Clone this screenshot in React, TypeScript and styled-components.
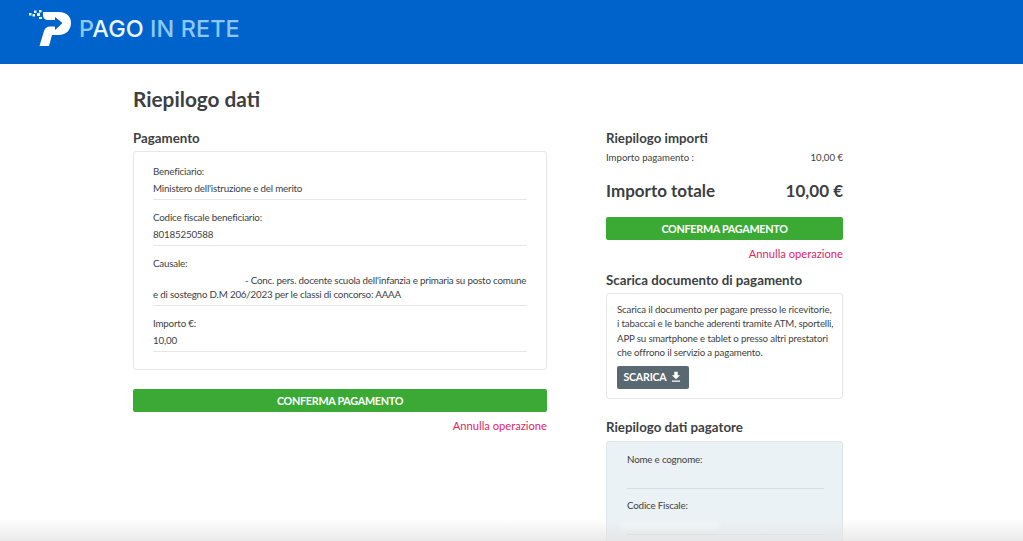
import styled, { createGlobalStyle } from 'styled-components';
import { MdFileDownload } from 'react-icons/md';

const GlobalStyle = createGlobalStyle`
  html, body {
    margin: 0;
    padding: 0;
    height: 541px;
    overflow: hidden;
    background: #fff;
    font-family: "Lato", "Open Sans", sans-serif;
    color: #3d3f42;
  }
  * {
    box-sizing: border-box;
  }
`;

const Page = styled.div`
  position: relative;
  height: 541px;
  overflow: hidden;
`;

const Header = styled.header`
  display: flex;
  align-items: flex-start;
  height: 64px;
  padding: 10px 0 0 29px;
  background: #0063cb;
`;

const Brand = styled.div`
  display: flex;
  align-items: center;
  gap: 6px;
`;

const BrandName = styled.span`
  font-family: "Inter", sans-serif;
  font-size: 23.4px;
  font-weight: 500;
  letter-spacing: 0.1px;
  color: #8cc8fb;
  margin-top: -1px;

  b {
    font-weight: 500;
    color: #eaf5ff;
  }
`;

const Main = styled.main`
  width: 710px;
  margin-left: 133px;
  padding-top: 22px;
`;

const Title = styled.h1`
  margin: 0 0 18px;
  height: 26px;
  font-size: 20.8px;
  line-height: 26px;
  font-weight: 700;
`;

const Columns = styled.div`
  display: grid;
  grid-template-columns: 414px 237px;
  column-gap: 59px;
  align-items: start;
`;

const Column = styled.section`
  display: flex;
  flex-direction: column;
`;

const SectionTitle = styled.h2`
  margin: 0 0 5px;
  height: 16px;
  font-size: 13.3px;
  line-height: 16px;
  font-weight: 700;
  white-space: nowrap;
`;

const Card = styled.div`
  border: 1px solid #e6e6e6;
  border-radius: 3px;
  background: #fff;
`;

const DataCard = styled(Card)`
  padding: 11px 19px 17px;
  margin-bottom: 19px;
`;

const Field = styled.div`
  padding-bottom: 4px;
  border-bottom: 1px solid #e6e6e6;
  margin-bottom: 9px;

  &:last-child {
    margin-bottom: 0;
  }
`;

const Label = styled.div`
  height: 17px;
  font-size: 9.8px;
  line-height: 17px;
  letter-spacing: -0.2px;
  margin-bottom: 1px;
`;

const Value = styled.div<{ $indent?: number }>`
  font-size: 9.8px;
  line-height: 14px;
  letter-spacing: -0.2px;
  min-height: 14px;
  margin-top: 1px;
  text-indent: ${(p) => p.$indent ?? 0}px;
`;

const PrimaryButton = styled.button`
  display: block;
  width: 100%;
  height: 23px;
  padding: 0;
  border: 0;
  border-radius: 2px;
  background: #3aaa35;
  color: #fff;
  font-family: inherit;
  font-size: 10.8px;
  font-weight: 700;
  letter-spacing: -0.3px;
  line-height: 23px;
  text-align: center;
`;

const CancelLink = styled.a`
  display: block;
  height: 16px;
  margin-top: 6px;
  font-size: 11.2px;
  line-height: 16px;
  text-align: right;
  color: #e2265f;
`;

const AmountRow = styled.div`
  display: flex;
  justify-content: space-between;
  height: 14px;
  font-size: 9.6px;
  line-height: 14px;
  margin-top: 2px;
`;

const TotalRow = styled.div`
  display: flex;
  justify-content: space-between;
  height: 24px;
  margin: 14px 0 14px;
  font-size: 17px;
  line-height: 24px;
  font-weight: 700;
`;

const SummaryBlock = styled.div`
  margin-bottom: 10px;
`;

const DownloadCard = styled(Card)`
  padding: 8px 10px 9px;
  margin-bottom: 20px;
`;

const DownloadText = styled.p`
  margin: 0 0 6px;
  font-size: 9.7px;
  line-height: 14.3px;
  letter-spacing: -0.15px;
  white-space: nowrap;
`;

const DownloadButton = styled.button`
  display: inline-flex;
  align-items: center;
  justify-content: center;
  gap: 2px;
  width: 72px;
  height: 23px;
  padding: 0;
  border: 0;
  border-radius: 2px;
  background: #5a6872;
  color: #fff;
  font-family: inherit;
  font-size: 10.6px;
  font-weight: 700;
  letter-spacing: -0.2px;
`;

const PayerCard = styled(Card)`
  padding: 9px 18px 0 20px;
  margin-top: 1px;
  background: #ebf2f6;
  border-color: #e1e6ea;
  height: 140px;
`;

const PayerField = styled.div`
  height: 38px;
  border-bottom: 1px solid #d8dde0;
  margin-bottom: 8px;
  position: relative;
  font-size: 9.8px;
  letter-spacing: -0.2px;
  line-height: 17px;
`;

const Redaction = styled.span`
  position: absolute;
  left: -7px;
  bottom: 4px;
  width: 100px;
  height: 8px;
  border-radius: 4px;
  background: #f4f8fa;
  filter: blur(2px);
`;

const BottomFade = styled.div`
  position: absolute;
  left: 0;
  right: 0;
  bottom: 0;
  height: 22px;
  background: linear-gradient(to bottom, rgba(235, 235, 235, 0), rgba(228, 228, 228, 0.8));
  pointer-events: none;
`;

function Logo() {
  return (
    <svg width="44" height="38" viewBox="0 0 44 38" fill="none">
      <g fill="#e8f3fc">
        <rect x="0" y="3" width="2.5" height="2.5" />
        <rect x="3.5" y="4" width="2.5" height="2.5" />
        <rect x="5" y="0.5" width="2.5" height="2.5" />
        <rect x="8" y="3" width="3" height="3" />
        <rect x="10" y="0" width="2.5" height="2.5" />
        <rect x="10" y="7" width="3" height="2" />
      </g>
      <path
        fill="#fff"
        d="M14 2 H30 C38 2 42 7 42 13 C42 20 37 25 30 25 H23 L20 36 H10.5 L15 21 C16 18 18 16.5 21 16.5 H26 V20 L33.5 13 L26 7 V10 H19 C16 10 14.5 8 14 6 Z"
      />
    </svg>
  );
}

function App() {
  return (
    <Page>
      <GlobalStyle />
      <Header>
        <Brand>
          <Logo />
          <BrandName>
            P<b>AGO</b> IN RETE
          </BrandName>
        </Brand>
      </Header>
      <Main>
        <Title>Riepilogo dati</Title>
        <Columns>
          <Column>
            <SectionTitle>Pagamento</SectionTitle>
            <DataCard>
              <Field>
                <Label>Beneficiario:</Label>
                <Value>Ministero dell'istruzione e del merito</Value>
              </Field>
              <Field>
                <Label>Codice fiscale beneficiario:</Label>
                <Value>80185250588</Value>
              </Field>
              <Field>
                <Label>Causale:</Label>
                <Value $indent={92}>
                  - Conc. pers. docente scuola dell'infanzia e primaria su posto comune e di sostegno D.M
                  206/2023 per le classi di concorso: AAAA
                </Value>
              </Field>
              <Field>
                <Label>Importo €:</Label>
                <Value>10,00</Value>
              </Field>
            </DataCard>
            <PrimaryButton>CONFERMA PAGAMENTO</PrimaryButton>
            <CancelLink>Annulla operazione</CancelLink>
          </Column>
          <Column>
            <SummaryBlock>
              <SectionTitle>Riepilogo importi</SectionTitle>
              <AmountRow>
                <span>Importo pagamento :</span>
                <span>10,00 €</span>
              </AmountRow>
              <TotalRow>
                <span>Importo totale</span>
                <span>10,00 €</span>
              </TotalRow>
              <PrimaryButton>CONFERMA PAGAMENTO</PrimaryButton>
              <CancelLink>Annulla operazione</CancelLink>
            </SummaryBlock>
            <SectionTitle>Scarica documento di pagamento</SectionTitle>
            <DownloadCard>
              <DownloadText>
                Scarica il documento per pagare presso le ricevitorie,
                <br />
                i tabaccai e le banche aderenti tramite ATM, sportelli,
                <br />
                APP su smartphone e tablet o presso altri prestatori
                <br />
                che offrono il servizio a pagamento.
              </DownloadText>
              <DownloadButton>
                SCARICA <MdFileDownload size={14} />
              </DownloadButton>
            </DownloadCard>
            <SectionTitle>Riepilogo dati pagatore</SectionTitle>
            <PayerCard>
              <PayerField>Nome e cognome:</PayerField>
              <PayerField>
                Codice Fiscale:
                <Redaction />
              </PayerField>
            </PayerCard>
          </Column>
        </Columns>
      </Main>
      <BottomFade />
    </Page>
  );
}

export default App;
